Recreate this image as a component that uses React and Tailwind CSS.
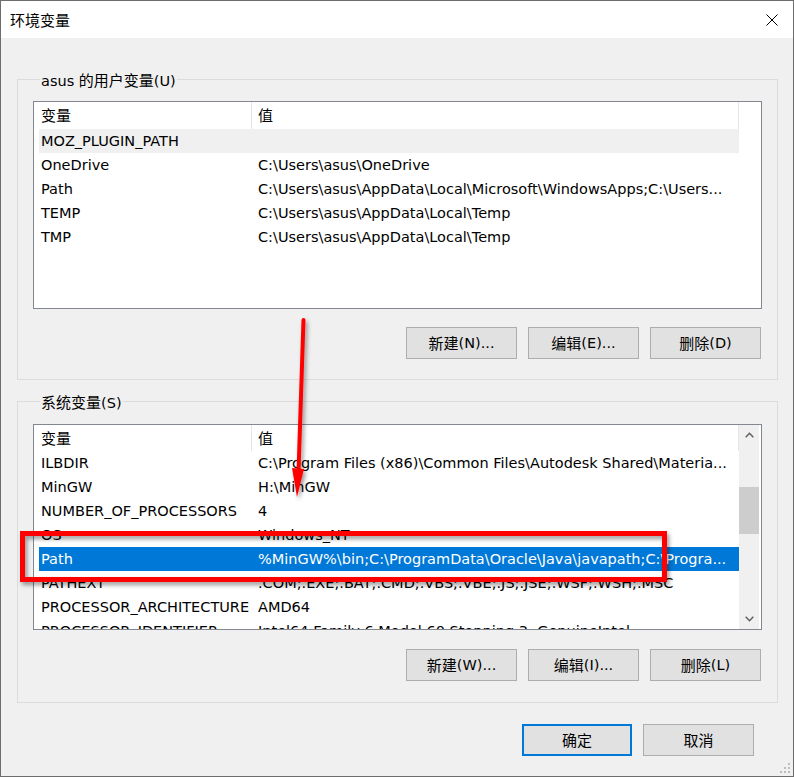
import React from "react";

// CJK glyphs in the dialog run a bit larger than the latin text
const Zh = ({ children }) => <span className="text-[15px]">{children}</span>;

const userVars = [
  { name: "MOZ_PLUGIN_PATH", value: "", hover: true },
  { name: "OneDrive", value: "C:\\Users\\asus\\OneDrive" },
  {
    name: "Path",
    value: "C:\\Users\\asus\\AppData\\Local\\Microsoft\\WindowsApps;C:\\Users...",
  },
  { name: "TEMP", value: "C:\\Users\\asus\\AppData\\Local\\Temp" },
  { name: "TMP", value: "C:\\Users\\asus\\AppData\\Local\\Temp" },
];

const systemVars = [
  {
    name: "ILBDIR",
    value: "C:\\Program Files (x86)\\Common Files\\Autodesk Shared\\Materia...",
  },
  { name: "MinGW", value: "H:\\MinGW" },
  { name: "NUMBER_OF_PROCESSORS", value: "4" },
  { name: "OS", value: "Windows_NT" },
  {
    name: "Path",
    value: "%MinGW%\\bin;C:\\ProgramData\\Oracle\\Java\\javapath;C:\\Progra...",
    selected: true,
  },
  { name: "PATHEXT", value: ".COM;.EXE;.BAT;.CMD;.VBS;.VBE;.JS;.JSE;.WSF;.WSH;.MSC" },
  { name: "PROCESSOR_ARCHITECTURE", value: "AMD64" },
  { name: "PROCESSOR_IDENTIFIER", value: "Intel64 Family 6 Model 60 Stepping 3, GenuineIntel" },
];

const VarRow = ({ name, value, selected, hover }) => {
  let tone = "";
  if (selected) tone = "bg-[#0078d7] text-white";
  else if (hover) tone = "bg-[#f0f0f0]";
  return (
    <div className={`flex h-[24px] shrink-0 items-center whitespace-nowrap pt-[2px] ${tone}`}>
      <div className="w-[212px] shrink-0 overflow-hidden pl-[2px]">{name}</div>
      <div className="min-w-0 flex-1 overflow-hidden pl-[7px]">{value}</div>
    </div>
  );
};

const Chevron = ({ up }) => (
  <svg width="9" height="6" viewBox="0 0 9 6">
    <path
      d={up ? "M0.7 5.3 L4.5 1.3 L8.3 5.3" : "M0.7 0.7 L4.5 4.7 L8.3 0.7"}
      fill="none"
      stroke="#606060"
      strokeWidth="1.5"
    />
  </svg>
);

const Scrollbar = () => (
  <div className="flex w-[20px] shrink-0 flex-col bg-[#f0f0f0]">
    <div className="flex h-[20px] items-center justify-center">
      <Chevron up />
    </div>
    <div className="flex-1 pt-[42px]">
      <div className="h-[47px] bg-[#cdcdcd]" />
    </div>
    <div className="flex h-[20px] items-center justify-center">
      <Chevron />
    </div>
  </div>
);

const VarList = ({ rows, height, headerH, scroll }) => (
  <div className={`flex overflow-hidden border border-[#828790] bg-white ${height}`}>
    <div className="flex w-[705px] shrink-0 flex-col overflow-hidden pl-[5px]">
      <div className={`flex shrink-0 ${headerH}`}>
        <div className="flex w-[213px] items-center border-r border-[#e5e5e5] pt-[2px] pl-[2px]">
          <Zh>变量</Zh>
        </div>
        <div className="flex flex-1 items-center border-r border-[#e5e5e5] pt-[2px] pl-[6px]">
          <Zh>值</Zh>
        </div>
      </div>
      {rows.map((r) => (
        <VarRow key={r.name} {...r} />
      ))}
    </div>
    {scroll && <Scrollbar />}
  </div>
);

const Btn = ({ children, primary, width = "w-[111px]" }) => (
  <button
    className={`flex h-[32px] items-center justify-center bg-[#e1e1e1] pt-[2px] text-black ${width} ${
      primary ? "border-2 border-[#0078d7]" : "border border-[#adadad]"
    }`}
  >
    {children}
  </button>
);

const App = () => {
  return (
    <div className="relative h-[777px] w-[794px] font-['DejaVu_Sans','Noto_Sans_CJK_SC',sans-serif] text-[14.5px] text-black">
      <div className="flex h-full w-full flex-col border border-[#6d6d6d] bg-[#f0f0f0]">
        {/* title bar */}
        <div className="flex h-[37px] shrink-0 items-center justify-between bg-white pl-[9px]">
          <span className="pt-[3px] text-[15px]">环境变量</span>
          <div className="flex h-full w-[42px] items-center justify-center">
            <svg width="12" height="12" viewBox="0 0 12 12">
              <path d="M0.5 0.5 L11.5 11.5 M11.5 0.5 L0.5 11.5" stroke="#000" strokeWidth="1" />
            </svg>
          </div>
        </div>

        <div className="flex flex-col pl-[16px] pr-[15px]">
          <fieldset className="mt-[31px] border border-[#dcdcdc] px-[15px] pt-[12px] pb-[20px]">
            <legend className="ml-[7px] h-[20px] px-[1px] leading-[24px]">
              asus <Zh>的用户变量</Zh>(U)
            </legend>
            <VarList rows={userVars} height="h-[208px]" headerH="h-[27px]" />
            <div className="mt-[18px] flex justify-end gap-[11px] pr-[1px]">
              <Btn>
                <Zh>新建</Zh>(N)...
              </Btn>
              <Btn>
                <Zh>编辑</Zh>(E)...
              </Btn>
              <Btn>
                <Zh>删除</Zh>(D)
              </Btn>
            </div>
          </fieldset>

          <fieldset className="mt-[11px] border border-[#dcdcdc] px-[15px] pt-[13px] pb-[21px]">
            <legend className="ml-[7px] h-[20px] px-[1px] leading-[24px]">
              <Zh>系统变量</Zh>(S)
            </legend>
            <VarList rows={systemVars} height="h-[206px]" headerH="h-[26px]" scroll />
            <div className="mt-[19px] flex justify-end gap-[11px] pr-[1px]">
              <Btn>
                <Zh>新建</Zh>(W)...
              </Btn>
              <Btn>
                <Zh>编辑</Zh>(I)...
              </Btn>
              <Btn>
                <Zh>删除</Zh>(L)
              </Btn>
            </div>
          </fieldset>

          <div className="mt-[21px] flex justify-end gap-[11px] pr-[24px]">
            <Btn primary width="w-[110px]">
              <Zh>确定</Zh>
            </Btn>
            <Btn>
              <Zh>取消</Zh>
            </Btn>
          </div>
        </div>
      </div>

      {/* resize grip */}
      <svg className="absolute right-[4px] bottom-[4px]" width="10" height="10" viewBox="0 0 10 10">
        <g fill="#bdbdbd">
          <rect x="8" y="0" width="2" height="2" />
          <rect x="4" y="4" width="2" height="2" />
          <rect x="8" y="4" width="2" height="2" />
          <rect x="0" y="8" width="2" height="2" />
          <rect x="4" y="8" width="2" height="2" />
          <rect x="8" y="8" width="2" height="2" />
        </g>
      </svg>

      {/* red annotation drawn over the screenshot */}
      <svg className="pointer-events-none absolute inset-0" width="794" height="777">
        <defs>
          <filter id="shadow" x="-10%" y="-10%" width="130%" height="130%">
            <feDropShadow dx="2" dy="3" stdDeviation="2" floodColor="#000" floodOpacity="0.4" />
          </filter>
        </defs>
        <g filter="url(#shadow)">
          <rect x="22.5" y="533.5" width="642" height="46" fill="none" stroke="#ff0000" strokeWidth="5" />
          <path d="M303.5 320 L298.5 472" stroke="#ff0000" strokeWidth="4" strokeLinecap="round" />
          <path d="M292 468 L304 469 L297 497 Z" fill="#ff0000" />
        </g>
      </svg>
    </div>
  );
};

export default App;
